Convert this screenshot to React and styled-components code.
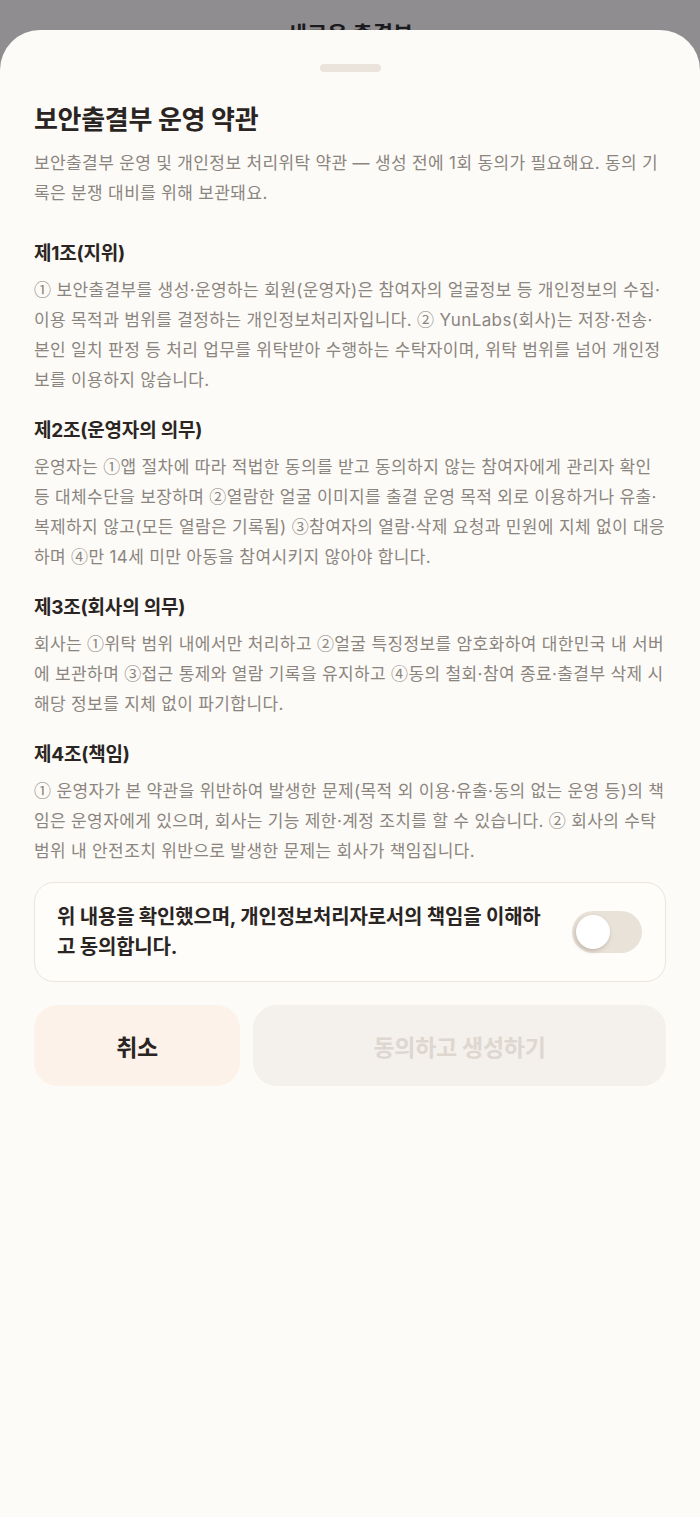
import React, { useState } from "react";
import styled, { createGlobalStyle } from "styled-components";

const GlobalStyle = createGlobalStyle`
  html, body {
    margin: 0;
    padding: 0;
    background: #8f8e93;
  }
  body {
    font-family: Inter, "Noto Sans CJK KR", sans-serif;
    -webkit-font-smoothing: antialiased;
  }
`;

const sections = [
  {
    title: "제1조(지위)",
    body:
      "① 보안출결부를 생성·운영하는 회원(운영자)은 참여자의 얼굴정보 등 개인정보의 수집·이용 목적과 범위를 결정하는 개인정보처리자입니다. ② YunLabs(회사)는 저장·전송·본인 일치 판정 등 처리 업무를 위탁받아 수행하는 수탁자이며, 위탁 범위를 넘어 개인정보를 이용하지 않습니다.",
  },
  {
    title: "제2조(운영자의 의무)",
    body:
      "운영자는 ①앱 절차에 따라 적법한 동의를 받고 동의하지 않는 참여자에게 관리자 확인 등 대체수단을 보장하며 ②열람한 얼굴 이미지를 출결 운영 목적 외로 이용하거나 유출·복제하지 않고(모든 열람은 기록됨) ③참여자의 열람·삭제 요청과 민원에 지체 없이 대응하며 ④만 14세 미만 아동을 참여시키지 않아야 합니다.",
  },
  {
    title: "제3조(회사의 의무)",
    body:
      "회사는 ①위탁 범위 내에서만 처리하고 ②얼굴 특징정보를 암호화하여 대한민국 내 서버에 보관하며 ③접근 통제와 열람 기록을 유지하고 ④동의 철회·참여 종료·출결부 삭제 시 해당 정보를 지체 없이 파기합니다.",
  },
  {
    title: "제4조(책임)",
    body:
      "① 운영자가 본 약관을 위반하여 발생한 문제(목적 외 이용·유출·동의 없는 운영 등)의 책임은 운영자에게 있으며, 회사는 기능 제한·계정 조치를 할 수 있습니다. ② 회사의 수탁 범위 내 안전조치 위반으로 발생한 문제는 회사가 책임집니다.",
  },
];

// circled numbers come from the CJK face so they stay small
function renderBody(text) {
  return text.split(/([①②③④])/).map((part, i) =>
    /[①②③④]/.test(part) ? <Circled key={i}>{part}</Circled> : part
  );
}

export default function App() {
  const [agreed, setAgreed] = useState(false);

  return (
    <Page>
      <GlobalStyle />
      <BackHeader>새로운 출결부</BackHeader>
      <Dim />
      <Sheet>
        <Handle />
        <Title>보안출결부 운영 약관</Title>
        <Description>
          보안출결부 운영 및 개인정보 처리위탁 약관 — 생성 전에 1회 동의가 필요해요. 동의 기록은 분쟁 대비를 위해 보관돼요.
        </Description>

        <Sections>
          {sections.map((s) => (
            <Section key={s.title}>
              <SectionTitle>{s.title}</SectionTitle>
              <SectionBody>{renderBody(s.body)}</SectionBody>
            </Section>
          ))}
        </Sections>

        <AgreeCard>
          <AgreeText>위 내용을 확인했으며, 개인정보처리자로서의 책임을 이해하고 동의합니다.</AgreeText>
          <Toggle on={agreed} onClick={() => setAgreed(!agreed)}>
            <Knob on={agreed} />
          </Toggle>
        </AgreeCard>

        <ButtonRow>
          <CancelButton>취소</CancelButton>
          <ConfirmButton disabled={!agreed}>동의하고 생성하기</ConfirmButton>
        </ButtonRow>
      </Sheet>
    </Page>
  );
}

const Page = styled.div`
  position: relative;
  min-height: 1517px;
  background: #fdfbf7;
  overflow: hidden;
`;

const BackHeader = styled.div`
  padding-top: 20px;
  text-align: center;
  font-size: 22px;
  line-height: 28px;
  font-weight: 700;
  color: #222;
`;

const Dim = styled.div`
  position: absolute;
  inset: 0;
  background: rgba(20, 18, 26, 0.47);
`;

const Sheet = styled.div`
  position: absolute;
  top: 30px;
  left: 0;
  right: 0;
  bottom: 0;
  background: #fdfbf7;
  border-radius: 40px 40px 0 0;
  padding: 34px 34px 0;
  display: flex;
  flex-direction: column;
`;

const Handle = styled.div`
  align-self: center;
  width: 61px;
  height: 8px;
  border-radius: 4px;
  background: #ebe4dc;
`;

const Title = styled.h1`
  margin: 32px 0 0;
  font-size: 26px;
  line-height: 32px;
  font-weight: 700;
  color: #2a2523;
  letter-spacing: -0.3px;
`;

const Description = styled.p`
  margin: 12px 0 0;
  font-size: 17px;
  line-height: 30px;
  color: #8b857f;
  letter-spacing: 0.4px;
  word-spacing: -0.2px;
`;

const Sections = styled.div`
  margin-top: 33px;
  display: flex;
  flex-direction: column;
  gap: 23px;
`;

const Section = styled.section`
  display: flex;
  flex-direction: column;
  gap: 8px;
`;

const SectionTitle = styled.h2`
  margin: 0;
  font-size: 19px;
  line-height: 26px;
  font-weight: 700;
  color: #2a2523;
  letter-spacing: -0.2px;
`;

const SectionBody = styled.p`
  margin: 0;
  font-size: 17px;
  line-height: 30px;
  color: #8b857f;
  letter-spacing: 0.4px;
  word-spacing: -0.2px;
`;

const Circled = styled.span`
  font-family: "Noto Sans CJK KR", sans-serif;
  line-height: 1;
`;

const AgreeCard = styled.div`
  margin-top: 16px;
  display: flex;
  align-items: center;
  gap: 30px;
  padding: 19px 23px 19px 22px;
  border: 1.5px solid #ebe5de;
  border-radius: 20px;
  background: #fffdfa;
`;

const AgreeText = styled.div`
  flex: 1;
  font-size: 20px;
  line-height: 30px;
  font-weight: 700;
  color: #2a2523;
  letter-spacing: -0.2px;
`;

const Toggle = styled.button`
  flex: none;
  width: 70px;
  height: 42px;
  border: none;
  border-radius: 21px;
  padding: 4px;
  background: ${(p) => (p.on ? "#2a2523" : "#e9e2d9")};
  display: flex;
  justify-content: ${(p) => (p.on ? "flex-end" : "flex-start")};
  align-items: center;
  cursor: pointer;
`;

const Knob = styled.span`
  width: 34px;
  height: 34px;
  border-radius: 50%;
  background: #ffffff;
  box-shadow: -1px 2px 4px rgba(90, 70, 50, 0.28);
`;

const ButtonRow = styled.div`
  margin-top: 23px;
  display: grid;
  grid-template-columns: 206px 1fr;
  gap: 13px;
`;

const BaseButton = styled.button`
  height: 81px;
  border: none;
  border-radius: 24px;
  font-family: inherit;
  font-size: 23px;
  font-weight: 700;
  letter-spacing: -0.3px;
  cursor: pointer;
`;

const CancelButton = styled(BaseButton)`
  background: #fcf2e9;
  color: #2a2523;
`;

const ConfirmButton = styled(BaseButton)`
  background: #f4f0eb;
  color: #ded7d0;
  &:disabled {
    cursor: default;
  }
`;
